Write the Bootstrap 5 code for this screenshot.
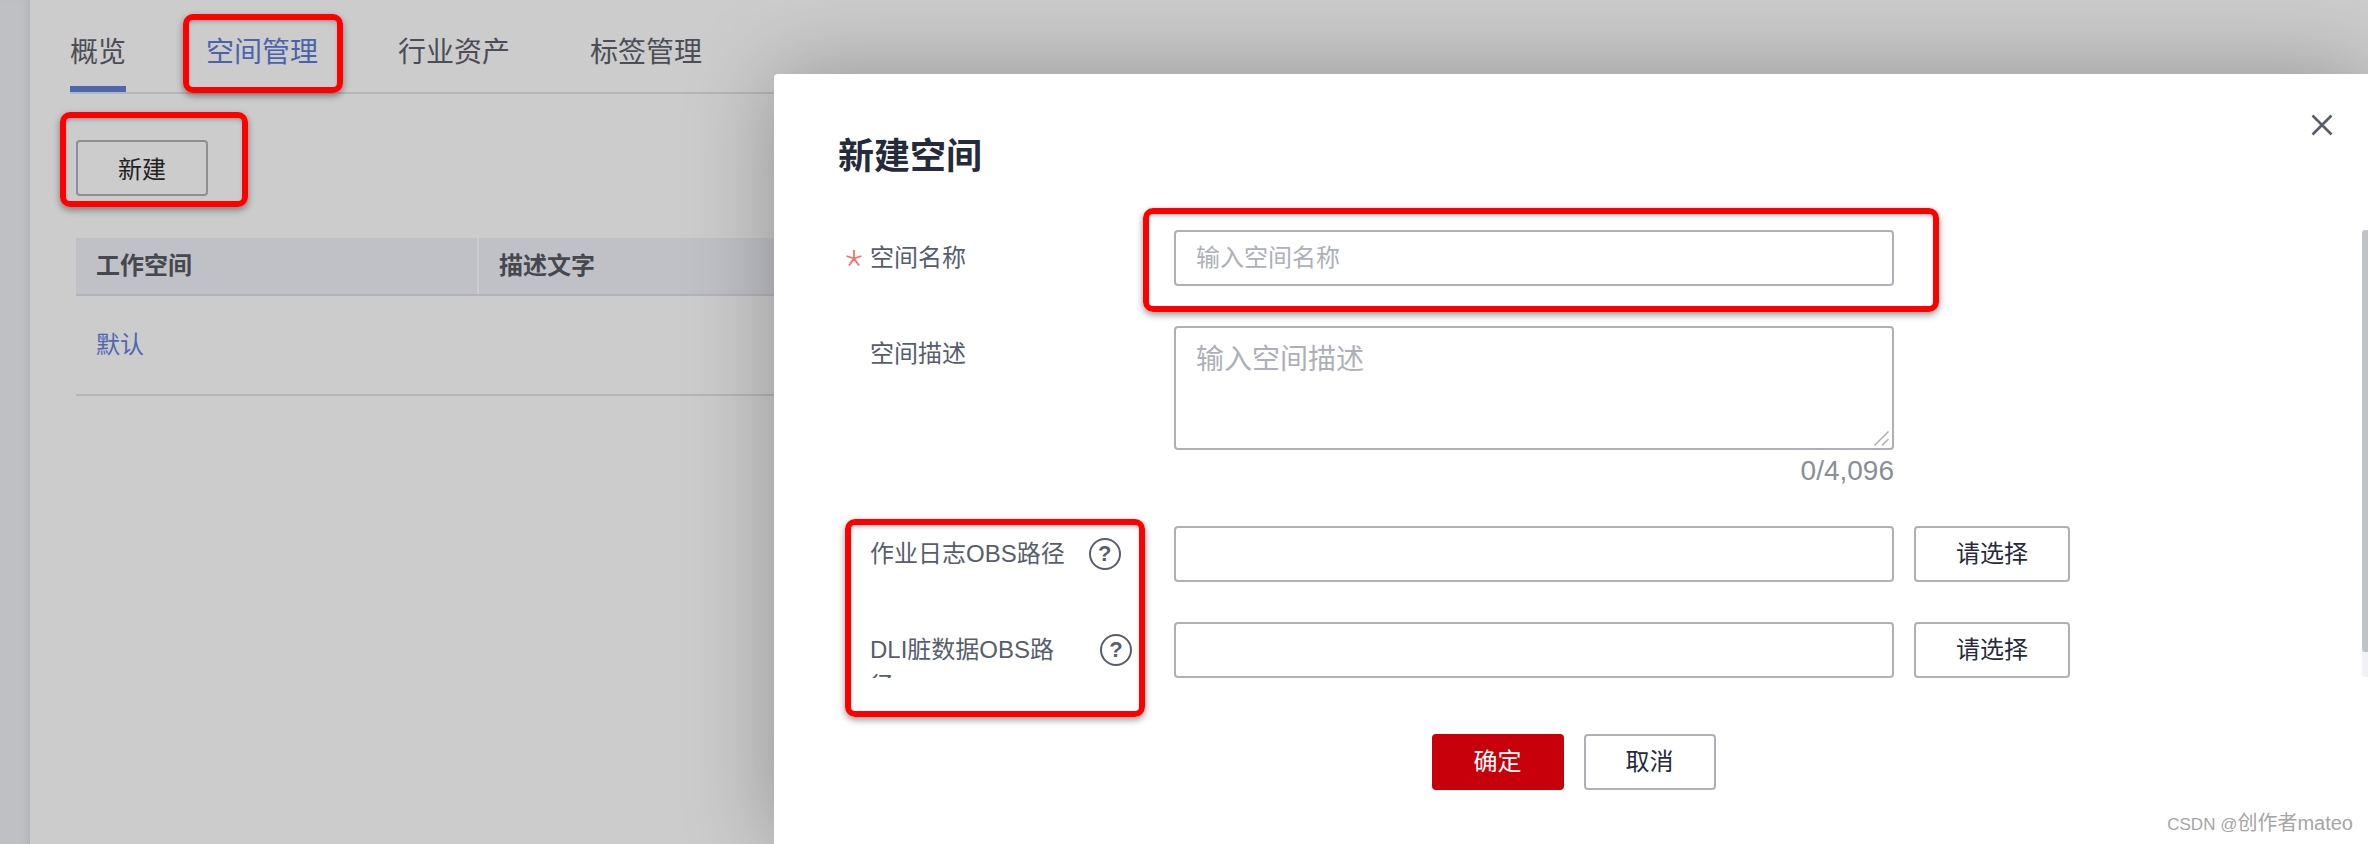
<!DOCTYPE html>
<html lang="zh-CN">
<head>
<meta charset="utf-8">
<title>新建空间</title>
<link href="https://cdn.jsdelivr.net/npm/bootstrap@5.3.0/dist/css/bootstrap.min.css" rel="stylesheet">
<style>
html,body{height:100%;margin:0}
body{font-family:"Liberation Sans","Noto Sans CJK SC",sans-serif;background:#cccccc;font-size:24px;overflow:hidden;color:#252b3a}
.hw-page{width:2368px;height:844px;position:relative;overflow:hidden}
.hw-strip{width:30px;flex:none;background:#bfc0c4;box-shadow:inset -6px 0 8px -6px rgba(0,0,0,.12)}
.hw-main{flex:1;padding-left:40px;min-width:0}
.hw-tabs{border-bottom:2px solid #b5b6ba;gap:80px;height:94px}
.hw-tab{font-size:28px;line-height:40px;padding-top:33px;height:92px;color:#4b4e56;text-decoration:none;display:block}
.hw-tab-current{border-bottom:6px solid #4f66b0}
.hw-tab-active{color:#4c63ab}
.hw-body{padding:46px 0 0 6px}
.hw-new.btn{width:132px;height:56px;border:2px solid #8e8f93;border-radius:4px;font-size:24px;line-height:1;padding:3px 0 0;color:#222;background:transparent;display:block}
.hw-table.table{margin-top:42px;width:2200px;table-layout:fixed;--bs-table-bg:transparent;margin-bottom:0;font-size:24px}
.hw-table th{background:#c0c1c6;height:57px;padding:0 20px;border-bottom:2px solid #b3b4b9;border-right:0;color:#45484f;font-weight:700;vertical-align:middle;box-shadow:none}
.hw-table th:first-child{width:402px;border-right:2px solid #cccccc}
.hw-table td{height:100px;padding:0 20px;border-bottom:2px solid #b5b6ba;background:transparent;vertical-align:middle;box-shadow:none}
.hw-link{color:#4f66b0;text-decoration:none}
.hw-modal{left:774px;top:74px;width:1594px;height:770px;background:#fff;border-top-left-radius:4px;box-shadow:0 0 90px rgba(0,0,0,.28);padding:57px 57px 0 64px}
.hw-title{font-size:36px;line-height:48px;font-weight:700;margin:2px 0 49px;color:#252b3a}
.hw-close{right:35px;top:40px;width:22px;height:22px;padding:0;border:0;background:none;line-height:0}
.hw-row{margin-bottom:40px}
.hw-label{width:336px;flex:none;height:56px;overflow:hidden;padding-left:32px;line-height:36px;padding-top:10px;color:#575d6c;font-size:24px;margin:0;position:relative}
.hw-label-row{gap:25px;align-items:flex-start}
.hw-label-text{max-width:206px;display:block}
.hw-star{position:absolute;left:8px;top:20px;width:16px;height:16px;display:block}
.hw-help{width:32px;height:32px;flex:none;border:2.5px solid #575d6c;border-radius:50%;font-size:22px;line-height:27px;text-align:center;color:#575d6c;font-weight:700;margin-top:2px;margin-left:-1px}
.hw-input.form-control{width:720px;height:56px;border:2px solid #adb0b8;border-radius:4px;padding:0 20px;font-size:24px;color:#252b3a;flex:none;box-shadow:none}
.hw-input.form-control::placeholder{color:#adb0b8;opacity:1}
.hw-areabox{width:720px;height:124px}
.hw-area.form-control{width:720px;height:124px;border:2px solid #adb0b8;border-radius:4px;padding:14px 20px;font-size:28px;line-height:36px;box-shadow:none;display:block;min-height:0;resize:none}
.hw-area.form-control::placeholder{color:#adb0b8;opacity:1}
.hw-grip{right:5px;bottom:4px;width:15px;height:15px;display:block}
.hw-count{width:720px;text-align:right;font-size:28px;line-height:34px;color:#8a8e99;margin-top:4px;margin-bottom:38px}
.hw-pick.btn{width:156px;height:56px;margin-left:20px;border:2px solid #adb0b8;border-radius:4px;font-size:24px;padding:0;color:#252b3a;background:#fff;flex:none}
.hw-foot{gap:20px;margin-top:56px;padding-right:2px}
.hw-ok.btn,.hw-cancel.btn{width:132px;height:56px;border-radius:4px;font-size:24px;padding:0}
.hw-ok.btn{background:#c7000b;border:2px solid #c7000b;color:#fff}
.hw-cancel.btn{background:#fff;border:2px solid #adb0b8;color:#252b3a}
.hw-track{right:0;top:156px;width:6px;height:447px;background:#f0f2f5;border-radius:3px 0 0 3px}
.hw-thumb{width:6px;height:422px;background:#c0c4c8;border-radius:3px 0 0 3px}
.hw-mark{border:6px solid #ff0000;border-radius:10px;box-shadow:0 3px 7px rgba(0,0,0,.4),inset 0 3px 5px -2px rgba(0,0,0,.3);pointer-events:none}
.hw-m1{left:183px;top:14px;width:160px;height:79px}
.hw-m2{left:60px;top:112px;width:188px;height:95px}
.hw-m3{left:1143px;top:208px;width:796px;height:104px}
.hw-m4{left:845px;top:519px;width:300px;height:198px}
.hw-water{right:15px;bottom:9px;font-size:20px;line-height:20px;color:#a5a5a5}
.hw-water-latin{font-size:17px}
</style>
</head>
<body>
<div class="hw-page d-flex">
  <div class="hw-strip"></div>
  <div class="hw-main">
    <nav class="hw-tabs d-flex">
      <a class="hw-tab hw-tab-current" href="#">概览</a>
      <a class="hw-tab hw-tab-active" href="#">空间管理</a>
      <a class="hw-tab" href="#">行业资产</a>
      <a class="hw-tab" href="#">标签管理</a>
    </nav>
    <div class="hw-body">
      <button type="button" class="btn hw-new">新建</button>
      <table class="table hw-table">
        <thead><tr><th>工作空间</th><th>描述文字</th></tr></thead>
        <tbody><tr><td><a class="hw-link" href="#">默认</a></td><td></td></tr></tbody>
      </table>
    </div>
  </div>

  <div class="hw-modal position-absolute">
    <button type="button" class="hw-close position-absolute" aria-label="关闭">
      <svg width="22" height="22" viewBox="0 0 22 22"><path d="M1.5 1.5 20.5 20.5M20.5 1.5 1.5 20.5" stroke="#575d6c" stroke-width="2.6" fill="none"/></svg>
    </button>
    <h2 class="hw-title">新建空间</h2>
    <div class="hw-row d-flex">
      <label class="hw-label">
        <svg class="hw-star" viewBox="0 0 16 16"><path d="M8 0V8.5M8 8.5 0.5 6M8 8.5 15.5 6M8 8.5 3 15.5M8 8.5 13 15.5" stroke="#f66f6a" stroke-width="1.8" fill="none"/></svg>
        空间名称
      </label>
      <input class="form-control hw-input" placeholder="输入空间名称">
    </div>
    <div class="d-flex">
      <label class="hw-label">空间描述</label>
      <div>
        <div class="hw-areabox position-relative">
          <textarea class="form-control hw-area" placeholder="输入空间描述"></textarea>
          <svg class="hw-grip position-absolute" viewBox="0 0 15 15"><path d="M0.5 14.5 14.5 0.5M8 14.5 14.5 8" stroke="#adb0b8" stroke-width="1.5" fill="none"/></svg>
        </div>
        <div class="hw-count">0/4,096</div>
      </div>
    </div>
    <div class="hw-row d-flex">
      <label class="hw-label"><span class="d-flex hw-label-row"><span class="hw-label-text">作业日志OBS路径</span><span class="hw-help">?</span></span></label>
      <input class="form-control hw-input">
      <button type="button" class="btn hw-pick">请选择</button>
    </div>
    <div class="d-flex">
      <label class="hw-label"><span class="d-flex hw-label-row"><span class="hw-label-text">DLI脏数据OBS路径</span><span class="hw-help">?</span></span></label>
      <input class="form-control hw-input">
      <button type="button" class="btn hw-pick">请选择</button>
    </div>
    <div class="hw-foot d-flex justify-content-center">
      <button type="button" class="btn hw-ok">确定</button>
      <button type="button" class="btn hw-cancel">取消</button>
    </div>
    <div class="hw-track position-absolute"><div class="hw-thumb"></div></div>
  </div>

  <div class="hw-mark position-absolute hw-m1"></div>
  <div class="hw-mark position-absolute hw-m2"></div>
  <div class="hw-mark position-absolute hw-m3"></div>
  <div class="hw-mark position-absolute hw-m4"></div>
  <div class="hw-water position-absolute"><span class="hw-water-latin">CSDN @</span>创作者mateo</div>
</div>
<script src="https://cdn.jsdelivr.net/npm/bootstrap@5.3.0/dist/js/bootstrap.bundle.min.js"></script>
</body>
</html>
